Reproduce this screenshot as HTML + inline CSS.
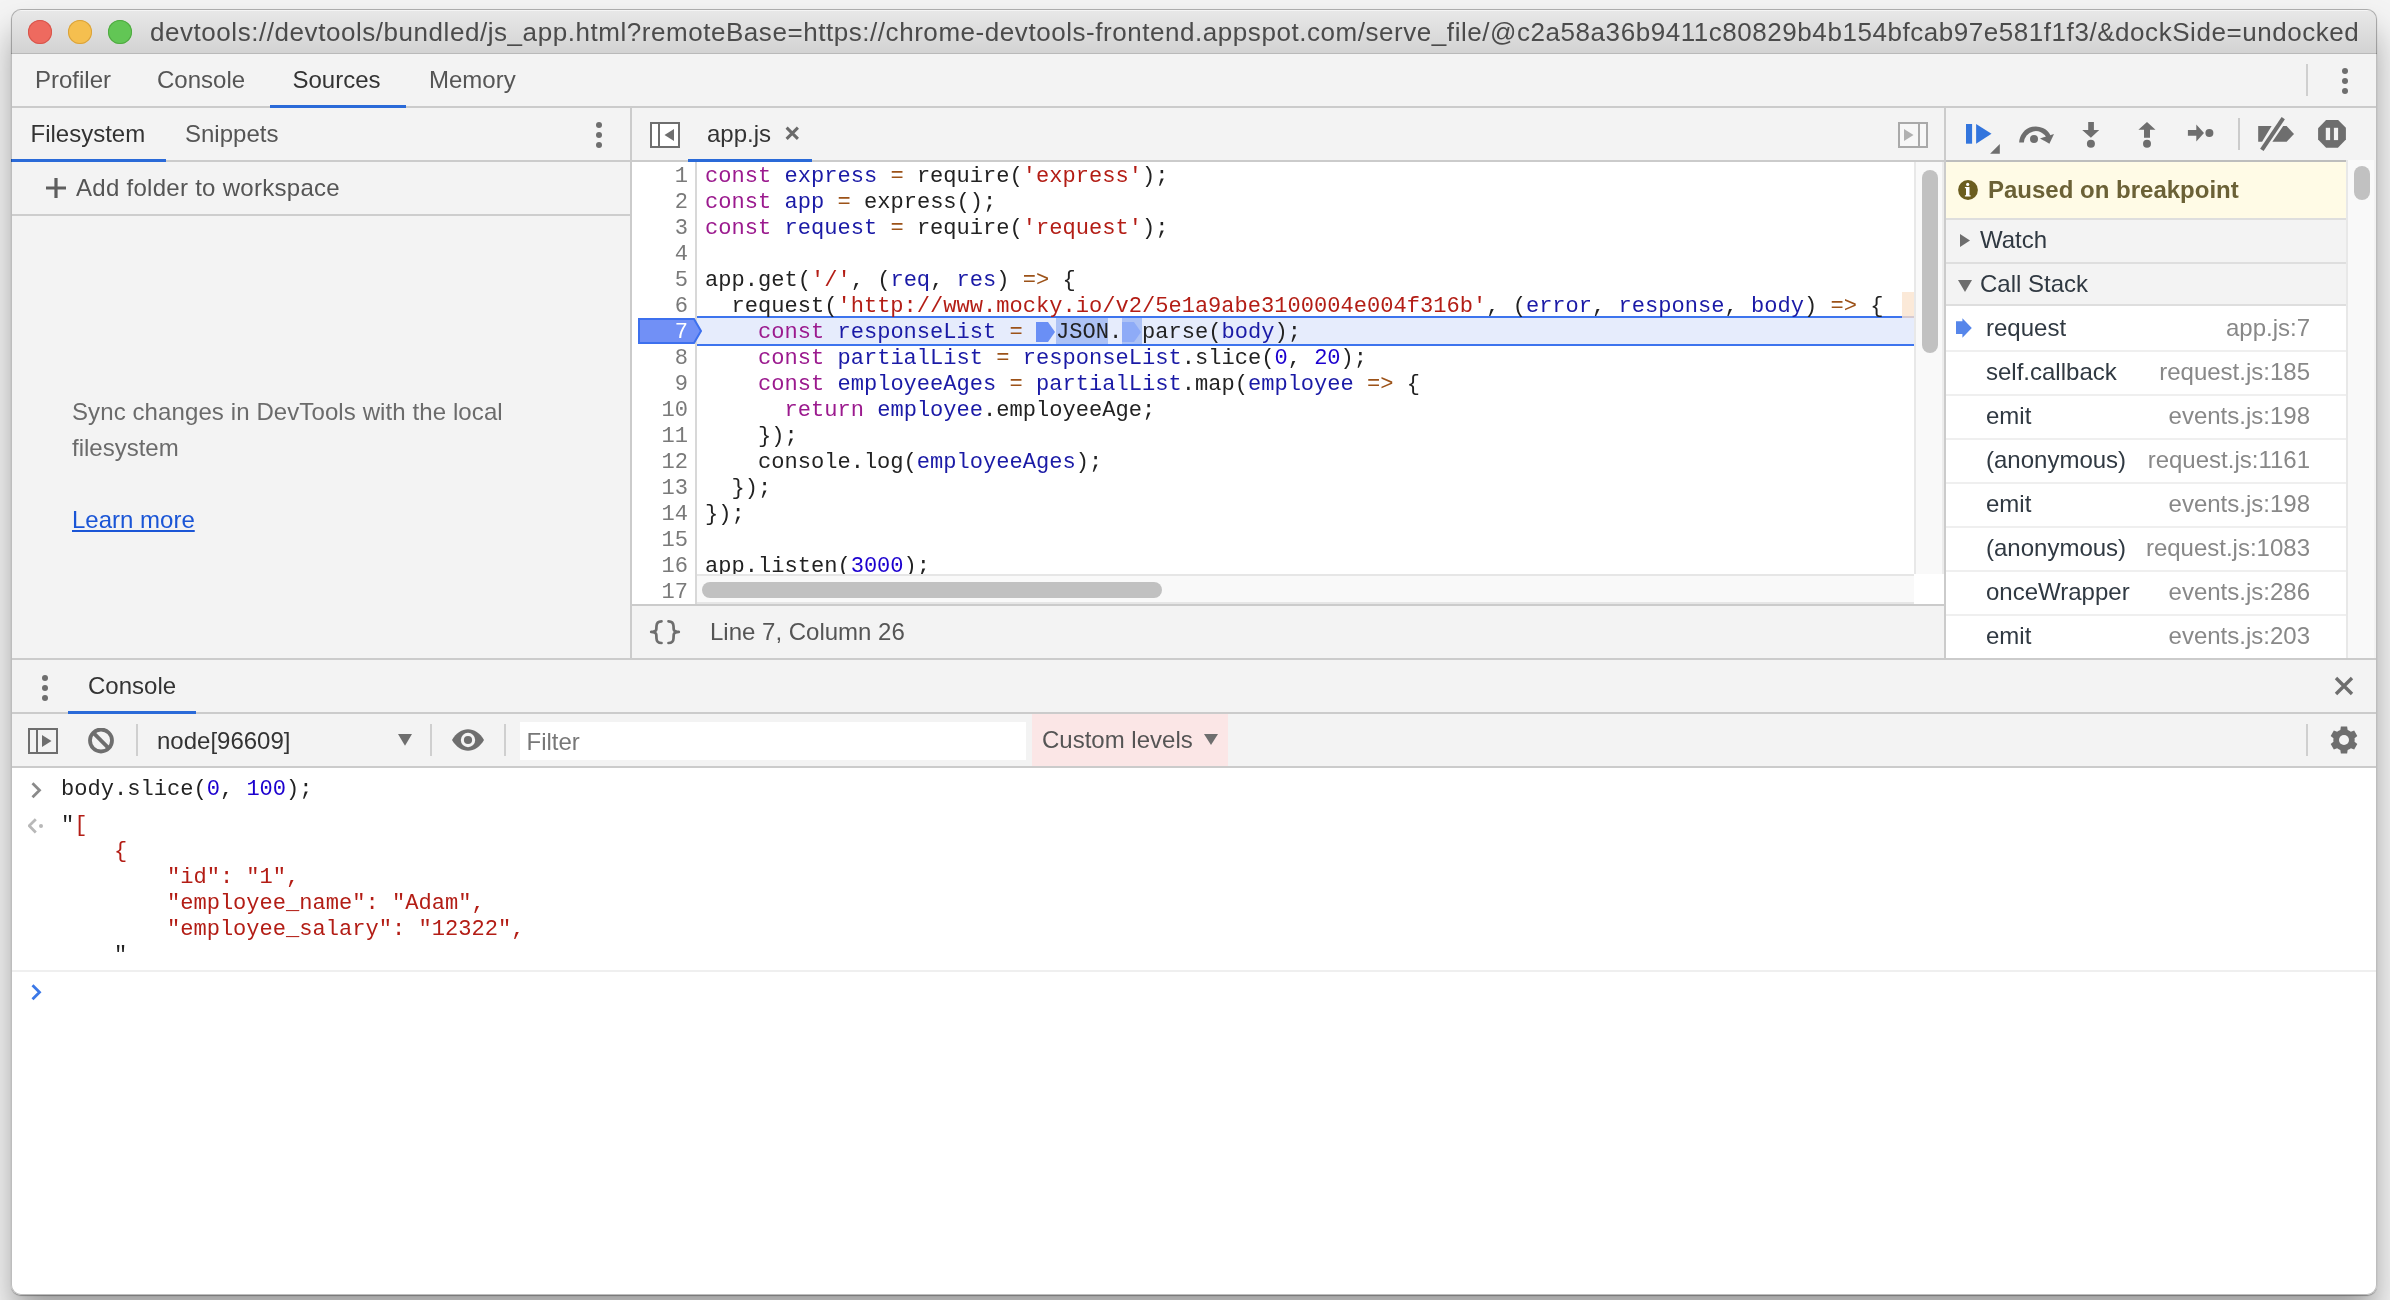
<!DOCTYPE html>
<html><head><meta charset="utf-8"><title>DevTools</title>
<style>
html,body{margin:0;padding:0;width:2390px;height:1300px;overflow:hidden;background:#f4f4f4;}
#shadow{position:absolute;left:11px;top:9px;width:2366px;height:1286px;border-radius:10px;box-shadow:0 22px 34px -2px rgba(0,0,0,.36), 0 1px 1px rgba(0,0,0,.3);}
#win{position:absolute;left:0;top:0;width:2390px;height:1300px;will-change:transform;clip-path:inset(9px 13px 5px 11px round 10px);background:#fff;}
#win div{position:absolute;}
#frame{position:absolute;left:11px;top:9px;width:2366px;height:1286px;border-radius:10px;box-shadow:inset 0 0 0 1px rgba(0,0,0,.26);pointer-events:none;}
.s{font-family:'Liberation Sans', sans-serif;font-size:24px;line-height:30px;white-space:pre;}
.m{font-family:'Liberation Mono', monospace;font-size:22.07px;line-height:26px;white-space:pre;}
</style></head><body>
<div id="shadow"></div>
<div id="win">
<div style="left:11px;top:9px;width:2366px;height:44px;background:linear-gradient(#e9e9e9,#d3d3d3)"></div>
<div style="left:11px;top:53px;width:2366px;height:1px;background:#b9b9b9"></div>
<div style="left:11px;top:10px;width:2366px;height:1px;background:rgba(255,255,255,.55)"></div>
<div style="left:28px;top:20px;width:24px;height:24px;border-radius:50%;background:#ee6a5f;box-shadow:inset 0 0 0 1px #d7554b"></div>
<div style="left:68px;top:20px;width:24px;height:24px;border-radius:50%;background:#f5bf4f;box-shadow:inset 0 0 0 1px #d9a23b"></div>
<div style="left:108px;top:20px;width:24px;height:24px;border-radius:50%;background:#62c655;box-shadow:inset 0 0 0 1px #4fa941"></div>
<div class="s" id="title" style="left:150px;top:17px;color:#4b4b4b;font-size:26px;letter-spacing:0.55px">devtools://devtools/bundled/js_app.html?remoteBase=https://chrome-devtools-frontend.appspot.com/serve_file/@c2a58a36b9411c80829b4b154bfcab97e581f1f3/&amp;dockSide=undocked</div>
<div style="left:12px;top:54px;width:2364px;height:52px;background:#f3f3f3"></div>
<div style="left:12px;top:106px;width:2364px;height:2px;background:#cbcbcb"></div>
<div class="s" style="left:35px;top:65px;color:#555;">Profiler</div>
<div class="s" style="left:157px;top:65px;color:#555;">Console</div>
<div class="s" style="left:292.5px;top:65px;color:#333;">Sources</div>
<div class="s" style="left:429px;top:65px;color:#555;">Memory</div>
<div style="left:270px;top:105px;width:136px;height:3px;background:#2a6ad8"></div>
<div style="left:2306px;top:64px;width:2px;height:32px;background:#cfcfcf"></div>
<div style="left:12px;top:108px;width:618px;height:550px;background:#f3f3f3"></div>
<div style="left:630px;top:108px;width:2px;height:550px;background:#cbcbcb"></div>
<div style="left:12px;top:160px;width:618px;height:2px;background:#cbcbcb"></div>
<div style="left:11px;top:159px;width:155px;height:3px;background:#2a6ad8"></div>
<div class="s" style="left:30.5px;top:118.5px;color:#333;">Filesystem</div>
<div class="s" style="left:185px;top:118.5px;color:#555;">Snippets</div>
<div style="left:596px;top:122px;width:6px;height:6px;border-radius:50%;background:#6e6e6e"></div>
<div style="left:596px;top:132px;width:6px;height:6px;border-radius:50%;background:#6e6e6e"></div>
<div style="left:596px;top:142px;width:6px;height:6px;border-radius:50%;background:#6e6e6e"></div>
<div style="left:12px;top:214px;width:618px;height:2px;background:#cdcdcd"></div>
<svg style="position:absolute;left:46px;top:178px;" width="20" height="20" viewBox="0 0 20 20"><path d="M10 0V20M0 10H20" stroke="#5e5e5e" stroke-width="3.2"/></svg>
<div class="s" style="left:76px;top:173px;color:#555;letter-spacing:0.28px">Add folder to workspace</div>
<div class="s" style="left:72px;top:397px;color:#6b6b6b;letter-spacing:0.1px">Sync changes in DevTools with the local</div>
<div class="s" style="left:72px;top:433px;color:#6b6b6b;">filesystem</div>
<div class="s" style="left:72px;top:505px;color:#1a55d6;"><span style="text-decoration:underline;text-underline-offset:2px">Learn more</span></div>
<div style="left:632px;top:108px;width:1312px;height:52px;background:#f3f3f3"></div>
<div style="left:632px;top:160px;width:1312px;height:2px;background:#cbcbcb"></div>
<div style="left:1944px;top:108px;width:2px;height:550px;background:#cbcbcb"></div>
<svg style="position:absolute;left:650px;top:122px;" width="30" height="26" viewBox="0 0 30 26"><rect x="1" y="1" width="28" height="24" fill="#fff" stroke="#6e6e6e" stroke-width="2"/><path d="M9 1V25" stroke="#6e6e6e" stroke-width="2"/><path d="M24 7L14.5 13L24 19Z" fill="#6e6e6e"/></svg>
<div class="s" style="left:707px;top:118.5px;color:#333;">app.js</div>
<svg style="position:absolute;left:785px;top:126px;" width="15" height="15" viewBox="0 0 15 15"><path d="M1.6 1.6L12.9 12.9M12.9 1.6L1.6 12.9" stroke="#6a6a6a" stroke-width="3"/></svg>
<div style="left:688px;top:159px;width:124px;height:3px;background:#2a6ad8"></div>
<svg style="position:absolute;left:1898px;top:122px;" width="30" height="26" viewBox="0 0 30 26"><rect x="1" y="1" width="28" height="24" fill="#f7f7f7" stroke="#a9a9a9" stroke-width="2"/><path d="M21 1V25" stroke="#a9a9a9" stroke-width="2"/><path d="M6 7L15.5 13L6 19Z" fill="#b0b0b0"/></svg>
<div style="left:632px;top:162px;width:1312px;height:442px;background:#fff"></div>
<div style="left:695px;top:162px;width:2px;height:442px;background:#d8d8d8"></div>
<div style="left:697px;top:316px;width:1217px;height:30px;background:#e6ecfc;box-shadow:inset 0 2px 0 #3d74ee, inset 0 -2px 0 #3d74ee"></div>
<div class="m" style="left:633px;width:55px;text-align:right;top:164px;color:#7a7a7a">1</div>
<div class="m" style="left:705px;top:164px;color:#222"><span style="color:#9b1a8e">const</span> <span style="color:#1a1aa6">express</span> <span style="color:#9c5218">=</span> require(<span style="color:#b31d15">&#x27;express&#x27;</span>);</div>
<div class="m" style="left:633px;width:55px;text-align:right;top:190px;color:#7a7a7a">2</div>
<div class="m" style="left:705px;top:190px;color:#222"><span style="color:#9b1a8e">const</span> <span style="color:#1a1aa6">app</span> <span style="color:#9c5218">=</span> express();</div>
<div class="m" style="left:633px;width:55px;text-align:right;top:216px;color:#7a7a7a">3</div>
<div class="m" style="left:705px;top:216px;color:#222"><span style="color:#9b1a8e">const</span> <span style="color:#1a1aa6">request</span> <span style="color:#9c5218">=</span> require(<span style="color:#b31d15">&#x27;request&#x27;</span>);</div>
<div class="m" style="left:633px;width:55px;text-align:right;top:242px;color:#7a7a7a">4</div>
<div class="m" style="left:633px;width:55px;text-align:right;top:268px;color:#7a7a7a">5</div>
<div class="m" style="left:705px;top:268px;color:#222">app.get(<span style="color:#b31d15">&#x27;/&#x27;</span>, (<span style="color:#1a1aa6">req</span>, <span style="color:#1a1aa6">res</span>) <span style="color:#9c5218">=&gt;</span> {</div>
<div class="m" style="left:633px;width:55px;text-align:right;top:294px;color:#7a7a7a">6</div>
<div class="m" style="left:705px;top:294px;color:#222">  request(<span style="color:#b31d15">&#x27;http://www.mocky.io/v2/5e1a9abe3100004e004f316b&#x27;</span>, (<span style="color:#1a1aa6">error</span>, <span style="color:#1a1aa6">response</span>, <span style="color:#1a1aa6">body</span>) <span style="color:#9c5218">=&gt;</span> {</div>
<div class="m" style="left:633px;width:55px;text-align:right;top:320px;color:#fff">7</div>
<div class="m" style="left:633px;width:55px;text-align:right;top:346px;color:#7a7a7a">8</div>
<div class="m" style="left:705px;top:346px;color:#222">    <span style="color:#9b1a8e">const</span> <span style="color:#1a1aa6">partialList</span> <span style="color:#9c5218">=</span> <span style="color:#1a1aa6">responseList</span>.slice(<span style="color:#1c00cf">0</span>, <span style="color:#1c00cf">20</span>);</div>
<div class="m" style="left:633px;width:55px;text-align:right;top:372px;color:#7a7a7a">9</div>
<div class="m" style="left:705px;top:372px;color:#222">    <span style="color:#9b1a8e">const</span> <span style="color:#1a1aa6">employeeAges</span> <span style="color:#9c5218">=</span> <span style="color:#1a1aa6">partialList</span>.map(<span style="color:#1a1aa6">employee</span> <span style="color:#9c5218">=&gt;</span> {</div>
<div class="m" style="left:633px;width:55px;text-align:right;top:398px;color:#7a7a7a">10</div>
<div class="m" style="left:705px;top:398px;color:#222">      <span style="color:#9b1a8e">return</span> <span style="color:#1a1aa6">employee</span>.employeeAge;</div>
<div class="m" style="left:633px;width:55px;text-align:right;top:424px;color:#7a7a7a">11</div>
<div class="m" style="left:705px;top:424px;color:#222">    });</div>
<div class="m" style="left:633px;width:55px;text-align:right;top:450px;color:#7a7a7a">12</div>
<div class="m" style="left:705px;top:450px;color:#222">    console.log(<span style="color:#1a1aa6">employeeAges</span>);</div>
<div class="m" style="left:633px;width:55px;text-align:right;top:476px;color:#7a7a7a">13</div>
<div class="m" style="left:705px;top:476px;color:#222">  });</div>
<div class="m" style="left:633px;width:55px;text-align:right;top:502px;color:#7a7a7a">14</div>
<div class="m" style="left:705px;top:502px;color:#222">});</div>
<div class="m" style="left:633px;width:55px;text-align:right;top:528px;color:#7a7a7a">15</div>
<div class="m" style="left:633px;width:55px;text-align:right;top:554px;color:#7a7a7a">16</div>
<div class="m" style="left:705px;top:554px;color:#222">app.listen(<span style="color:#1c00cf">3000</span>);</div>
<div class="m" style="left:633px;width:55px;text-align:right;top:580px;color:#7a7a7a">17</div>
<svg style="position:absolute;left:637px;top:317px;" width="68" height="28" viewBox="0 0 68 28"><path d="M2 2H57L64 14L57 26H2Z" fill="#7190f6" stroke="#3d70ee" stroke-width="2"/></svg>
<div class="m" style="left:633px;width:55px;text-align:right;top:320px;color:#fff">7</div>
<div class="m" style="left:705px;top:320px;color:#222">    <span style="color:#9b1a8e">const</span> <span style="color:#1a1aa6">responseList</span> <span style="color:#9c5218">=</span> </div>
<div style="left:1056px;top:318px;width:52px;height:26px;background:#adc2f5"></div>
<div style="left:1122px;top:318px;width:20px;height:26px;background:#adc2f5"></div>
<svg style="position:absolute;left:1036px;top:322px;" width="20" height="20" viewBox="0 0 20 20"><path d="M0 0H12L19 10L12 20H0Z" fill="#6a8ff5"/></svg>
<svg style="position:absolute;left:1122px;top:322px;" width="20" height="20" viewBox="0 0 20 20"><path d="M0 0H12L19 10L12 20H0Z" fill="#8eabf7"/></svg>
<div class="m" style="left:1056px;top:320px;color:#222">JSON.</div>
<div class="m" style="left:1142px;top:320px;color:#222">parse(<span style="color:#1a1aa6">body</span>);</div>
<div style="left:1902px;top:292px;width:12px;height:24px;background:#fbe9d8"></div>
<div style="left:1902px;top:316px;width:12px;height:2px;background:#d6cad0"></div>
<div style="left:1914px;top:162px;width:30px;height:412px;background:#f9f9f9;box-shadow:inset 2px 0 0 #e8e8e8, inset -2px 0 0 #ececec"></div>
<div style="left:1922px;top:170px;width:16px;height:183px;background:#c1c1c1;border-radius:8px"></div>
<div style="left:697px;top:574px;width:1217px;height:30px;background:#f9f9f9;box-shadow:inset 0 2px 0 #e6e6e6, inset 0 -2px 0 #e6e6e6"></div>
<div style="left:702px;top:582px;width:460px;height:16px;background:#c1c1c1;border-radius:8px"></div>
<div style="left:1914px;top:574px;width:30px;height:30px;background:#fff"></div>
<div style="left:632px;top:604px;width:1312px;height:54px;background:#f3f3f3"></div>
<div style="left:632px;top:604px;width:1312px;height:2px;background:#cbcbcb"></div>
<svg style="position:absolute;left:649px;top:619px;" width="33" height="27" viewBox="0 0 33 27"><path d="M12.5 2.3C9 2.3 7.6 3.8 7.5 7L7.3 10.3C7.2 11.8 6 12.6 2.2 12.9C6 13.2 7.2 14 7.3 15.7L7.5 19.5C7.6 22.7 9 24 12.5 24" fill="none" stroke="#6e6e6e" stroke-width="2.7" stroke-linecap="round" stroke-linejoin="round"/><path d="M19.5 2.3C23 2.3 24.4 3.8 24.5 7L24.7 10.3C24.8 11.8 26 12.6 29.8 12.9C26 13.2 24.8 14 24.7 15.7L24.5 19.5C24.4 22.7 23 24 19.5 24" fill="none" stroke="#6e6e6e" stroke-width="2.7" stroke-linecap="round" stroke-linejoin="round"/></svg>
<div class="s" style="left:710px;top:617px;color:#555;">Line 7, Column 26</div>
<div style="left:1946px;top:108px;width:430px;height:52px;background:#f3f3f3"></div>
<div style="left:1946px;top:160px;width:400px;height:2px;background:#bdbdbd"></div>
<svg style="position:absolute;left:1960px;top:115px;" width="45" height="45" viewBox="0 0 45 45"><rect x="6" y="9" width="6.1" height="19.7" fill="#3375dd"/><path d="M16.1 9.1L31.5 18.8L16.1 28.8Z" fill="#3375dd"/><path d="M30.1 38.8L39.8 29.1V38.8Z" fill="#6e6e6e"/></svg>
<svg style="position:absolute;left:2010px;top:115px;" width="50" height="40" viewBox="0 0 50 40"><path d="M11.5 27.5A14.3 14.3 0 0 1 38.5 21.5" fill="none" stroke="#6e6e6e" stroke-width="4.7"/><path d="M30 23.4L44 19.1L39.4 28.8Z" fill="#6e6e6e"/><circle cx="24" cy="23.9" r="4" fill="#6e6e6e"/></svg>
<svg style="position:absolute;left:2075px;top:115px;" width="30" height="40" viewBox="0 0 30 40"><path d="M13.2 7H18.9V15.1H24.2L15.9 22.8L7.2 15.1H13.2Z" fill="#6e6e6e"/><circle cx="15.9" cy="28.8" r="4" fill="#6e6e6e"/></svg>
<svg style="position:absolute;left:2130px;top:115px;" width="30" height="40" viewBox="0 0 30 40"><path d="M17 7.05L25.5 14.7H20V22.8H14V14.7H8.4Z" fill="#6e6e6e"/><circle cx="17" cy="28.8" r="4" fill="#6e6e6e"/></svg>
<svg style="position:absolute;left:2180px;top:115px;" width="40" height="40" viewBox="0 0 40 40"><path d="M7.9 15.1H16.3V9.4L24 17.9L16.3 26.5V20.8H7.9Z" fill="#6e6e6e"/><circle cx="29.4" cy="17.9" r="4" fill="#6e6e6e"/></svg>
<div style="left:2238px;top:118px;width:2px;height:32px;background:#cbcbcb"></div>
<svg style="position:absolute;left:2250px;top:110px;" width="50" height="45" viewBox="0 0 50 45"><path d="M8.2 16.1H21.6L12.1 31.7H8.2Z" fill="#6e6e6e"/><path d="M33.2 16.1H36.6L44 24L36.6 31.7H22.4Z" fill="#6e6e6e"/><path d="M10.1 38.7L13.6 40.9L34.9 9.3L31.6 7Z" fill="#6e6e6e"/></svg>
<svg style="position:absolute;left:2310px;top:110px;" width="45" height="45" viewBox="0 0 45 45"><path d="M16.1 10H28.1L35.9 17.8V29.6L27.9 37.8H16.1L8.1 29.6V18.3Z" fill="#6e6e6e"/><rect x="15.8" y="17.8" width="4.3" height="12.3" fill="#f3f3f3"/><rect x="23.9" y="17.8" width="4.2" height="12.3" fill="#f3f3f3"/></svg>
<div style="left:2342px;top:68px;width:6px;height:6px;border-radius:50%;background:#6e6e6e"></div>
<div style="left:2342px;top:78px;width:6px;height:6px;border-radius:50%;background:#6e6e6e"></div>
<div style="left:2342px;top:88px;width:6px;height:6px;border-radius:50%;background:#6e6e6e"></div>
<div style="left:1946px;top:162px;width:400px;height:56px;background:#fffbe6"></div>
<div style="left:1946px;top:218px;width:400px;height:2px;background:#dedede"></div>
<svg style="position:absolute;left:1958px;top:180px;" width="20" height="20" viewBox="0 0 20 20"><circle cx="10" cy="10" r="9.9" fill="#6b5d1f"/><path d="M6.9 7H11.5V15.2H12.6V16.4H6.9V15.2H8V8.3H6.9Z" fill="#fff"/><circle cx="9.7" cy="4.4" r="1.6" fill="#fff"/></svg>
<div class="s" style="left:1988px;top:175px;color:#6b6136;font-weight:bold">Paused on breakpoint</div>
<div style="left:1946px;top:220px;width:400px;height:42px;background:#f3f3f3"></div>
<div style="left:1946px;top:262px;width:400px;height:2px;background:#dedede"></div>
<svg style="position:absolute;left:1960px;top:234px;" width="10" height="13" viewBox="0 0 10 13"><path d="M0 0L10 6.5L0 13Z" fill="#6e6e6e"/></svg>
<div class="s" style="left:1980px;top:225px;color:#303942;">Watch</div>
<div style="left:1946px;top:264px;width:400px;height:40px;background:#f3f3f3"></div>
<div style="left:1946px;top:304px;width:400px;height:2px;background:#dedede"></div>
<svg style="position:absolute;left:1958px;top:280px;" width="14" height="12" viewBox="0 0 14 12"><path d="M0 0H14L7 12Z" fill="#6e6e6e"/></svg>
<div class="s" style="left:1980px;top:269px;color:#303942;">Call Stack</div>
<div style="left:1946px;top:306px;width:400px;height:352px;background:#fff"></div>
<div class="s" style="left:1986px;top:312.5px;color:#303942;">request</div>
<div class="s" style="left:2000px;width:2310px;left:0;text-align:right;top:312.5px;color:#888">app.js:7</div>
<div style="left:1946px;top:350px;width:400px;height:2px;background:#efefef"></div>
<div class="s" style="left:1986px;top:356.5px;color:#303942;">self.callback</div>
<div class="s" style="left:2000px;width:2310px;left:0;text-align:right;top:356.5px;color:#888">request.js:185</div>
<div style="left:1946px;top:394px;width:400px;height:2px;background:#efefef"></div>
<div class="s" style="left:1986px;top:400.5px;color:#303942;">emit</div>
<div class="s" style="left:2000px;width:2310px;left:0;text-align:right;top:400.5px;color:#888">events.js:198</div>
<div style="left:1946px;top:438px;width:400px;height:2px;background:#efefef"></div>
<div class="s" style="left:1986px;top:444.5px;color:#303942;">(anonymous)</div>
<div class="s" style="left:2000px;width:2310px;left:0;text-align:right;top:444.5px;color:#888">request.js:1161</div>
<div style="left:1946px;top:482px;width:400px;height:2px;background:#efefef"></div>
<div class="s" style="left:1986px;top:488.5px;color:#303942;">emit</div>
<div class="s" style="left:2000px;width:2310px;left:0;text-align:right;top:488.5px;color:#888">events.js:198</div>
<div style="left:1946px;top:526px;width:400px;height:2px;background:#efefef"></div>
<div class="s" style="left:1986px;top:532.5px;color:#303942;">(anonymous)</div>
<div class="s" style="left:2000px;width:2310px;left:0;text-align:right;top:532.5px;color:#888">request.js:1083</div>
<div style="left:1946px;top:570px;width:400px;height:2px;background:#efefef"></div>
<div class="s" style="left:1986px;top:576.5px;color:#303942;">onceWrapper</div>
<div class="s" style="left:2000px;width:2310px;left:0;text-align:right;top:576.5px;color:#888">events.js:286</div>
<div style="left:1946px;top:614px;width:400px;height:2px;background:#efefef"></div>
<div class="s" style="left:1986px;top:620.5px;color:#303942;">emit</div>
<div class="s" style="left:2000px;width:2310px;left:0;text-align:right;top:620.5px;color:#888">events.js:203</div>
<svg style="position:absolute;left:1956px;top:318px;" width="17" height="21" viewBox="0 0 17 21"><path d="M0 3.2H6.4V0.2L15.8 9.9L6.4 19.8V15.9H0Z" fill="#5686ea"/></svg>
<div style="left:2346px;top:160px;width:30px;height:498px;background:#f9f9f9;box-shadow:inset 2px 0 0 #e8e8e8, inset -2px 0 0 #f3f3f3"></div>
<div style="left:2354px;top:166px;width:16px;height:34px;background:#c1c1c1;border-radius:8px"></div>
<div style="left:12px;top:658px;width:2364px;height:2px;background:#cbcbcb"></div>
<div style="left:12px;top:660px;width:2364px;height:52px;background:#f3f3f3"></div>
<div style="left:12px;top:712px;width:2364px;height:2px;background:#cbcbcb"></div>
<div style="left:41.5px;top:674.5px;width:6px;height:6px;border-radius:50%;background:#6e6e6e"></div>
<div style="left:41.5px;top:684.5px;width:6px;height:6px;border-radius:50%;background:#6e6e6e"></div>
<div style="left:41.5px;top:694.5px;width:6px;height:6px;border-radius:50%;background:#6e6e6e"></div>
<div class="s" style="left:88px;top:670.5px;color:#333;">Console</div>
<div style="left:68px;top:711px;width:128px;height:3px;background:#2a6ad8"></div>
<svg style="position:absolute;left:2334px;top:676px;" width="20" height="20" viewBox="0 0 20 20"><path d="M2 2L18 18M18 2L2 18" stroke="#6e6e6e" stroke-width="3.4"/></svg>
<div style="left:12px;top:714px;width:2364px;height:52px;background:#f3f3f3"></div>
<div style="left:12px;top:766px;width:2364px;height:2px;background:#cbcbcb"></div>
<svg style="position:absolute;left:28px;top:728px;" width="30" height="26" viewBox="0 0 30 26"><rect x="1" y="1" width="28" height="24" fill="#f3f3f3" stroke="#6e6e6e" stroke-width="2"/><path d="M9 1V25" stroke="#6e6e6e" stroke-width="2"/><path d="M14 7L23.5 13L14 19Z" fill="#6e6e6e"/></svg>
<svg style="position:absolute;left:88px;top:728px;" width="26" height="26" viewBox="0 0 26 26"><circle cx="13" cy="12.5" r="11" fill="none" stroke="#6e6e6e" stroke-width="3.8"/><path d="M5.2 4.7L20.8 20.3" stroke="#6e6e6e" stroke-width="3.8"/></svg>
<div style="left:136px;top:724px;width:2px;height:32px;background:#cfcfcf"></div>
<div class="s" style="left:157px;top:726px;color:#333;">node[96609]</div>
<svg style="position:absolute;left:398px;top:734px;" width="14" height="12" viewBox="0 0 14 12"><path d="M0 0H14L7 11.8Z" fill="#6e6e6e"/></svg>
<div style="left:430px;top:724px;width:2px;height:32px;background:#cfcfcf"></div>
<svg style="position:absolute;left:452px;top:729px;" width="32" height="23" viewBox="0 0 32 23"><path d="M0 11C4 4 10 0.3 16 0.3S28 4 32 11C28 18 22 21.7 16 21.7S4 18 0 11Z" fill="#6e6e6e"/><circle cx="16" cy="11" r="7.2" fill="#f3f3f3"/><circle cx="16" cy="11" r="4.1" fill="#6e6e6e"/></svg>
<div style="left:504px;top:724px;width:2px;height:32px;background:#cfcfcf"></div>
<div style="left:520px;top:722px;width:506px;height:38px;background:#fff"></div>
<div class="s" style="left:526.5px;top:726.5px;color:#777;">Filter</div>
<div style="left:1032px;top:714px;width:196px;height:52px;background:#fbe6e6"></div>
<div class="s" style="left:1042px;top:725px;color:#555;">Custom levels</div>
<svg style="position:absolute;left:1204px;top:734px;" width="14" height="11" viewBox="0 0 14 11"><path d="M0 0H14L7 11Z" fill="#6e6e6e"/></svg>
<div style="left:2306px;top:724px;width:2px;height:32px;background:#cfcfcf"></div>
<svg style="position:absolute;left:2330px;top:726px;" width="28" height="28" viewBox="0 0 28 28"><path d="M18.84 4.46L17.66 3.95L17.13 0.46L10.87 0.46L10.34 3.95L8.15 5.04L7.12 5.80L3.83 4.52L0.71 9.94L3.46 12.14L3.32 14.58L3.46 15.86L0.71 18.06L3.83 23.48L7.12 22.20L9.16 23.54L10.34 24.05L10.87 27.54L17.13 27.54L17.66 24.05L19.85 22.96L20.88 22.20L24.17 23.48L27.29 18.06L24.54 15.86L24.68 13.42L24.54 12.14L27.29 9.94L24.17 4.52L20.88 5.80Z" fill="#6e6e6e"/><circle cx="14" cy="14" r="5" fill="#f3f3f3"/></svg>
<div style="left:12px;top:768px;width:2364px;height:526px;background:#fff"></div>
<svg style="position:absolute;left:31px;top:782px;" width="12" height="17" viewBox="0 0 12 17"><path d="M1.5 1.2L8.5 8.2L1.5 15.2" fill="none" stroke="#8a8a8a" stroke-width="2.8"/></svg>
<div class="m" style="left:61px;top:777px;color:#222">body.slice(<span style="color:#1c00cf">0</span>, <span style="color:#1c00cf">100</span>);</div>
<svg style="position:absolute;left:28px;top:818px;" width="16" height="16" viewBox="0 0 16 16"><path d="M7.8 1.2L1.2 7.8L7.8 14.4" fill="none" stroke="#b8b8b8" stroke-width="2.8"/><circle cx="13" cy="8" r="2" fill="#b8b8b8"/></svg>
<div class="m" style="left:61px;top:813px;color:#222">&quot;<span style="color:#b31d15">[</span></div>
<div class="m" style="left:61px;top:839px;color:#222"><span style="color:#b31d15">    {</span></div>
<div class="m" style="left:61px;top:865px;color:#222"><span style="color:#b31d15">        &quot;id&quot;: &quot;1&quot;,</span></div>
<div class="m" style="left:61px;top:891px;color:#222"><span style="color:#b31d15">        &quot;employee_name&quot;: &quot;Adam&quot;,</span></div>
<div class="m" style="left:61px;top:917px;color:#222"><span style="color:#b31d15">        &quot;employee_salary&quot;: &quot;12322&quot;,</span></div>
<div class="m" style="left:61px;top:943px;color:#222">    &quot;</div>
<div style="left:12px;top:970px;width:2364px;height:2px;background:#efefef"></div>
<svg style="position:absolute;left:31px;top:984px;" width="12" height="17" viewBox="0 0 12 17"><path d="M1.5 1.2L8.5 8.2L1.5 15.2" fill="none" stroke="#3b78e7" stroke-width="2.8"/></svg>
</div>
<div id="frame"></div>
</body></html>
